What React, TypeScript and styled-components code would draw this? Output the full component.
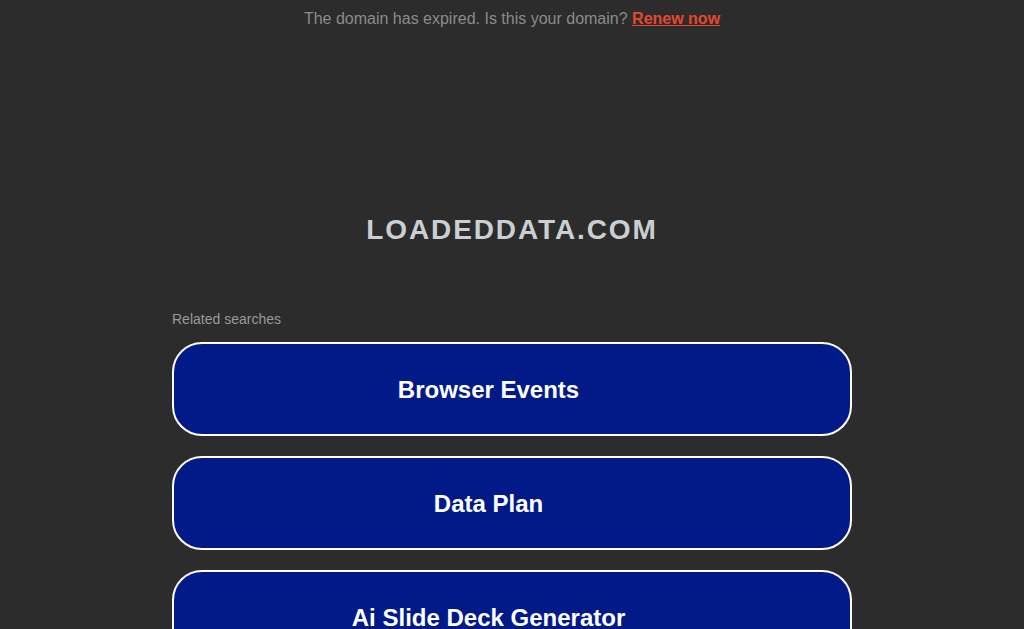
import React from "react";
import styled, { createGlobalStyle } from "styled-components";

const Global = createGlobalStyle`
  html, body { margin: 0; padding: 0; background: #2c2c2c; }
  body { font-family: Arial, "Liberation Sans", sans-serif; overflow: hidden; }
`;

const Page = styled.div`
  width: 1024px;
  height: 629px;
  background: #2c2c2c;
  display: flex;
  flex-direction: column;
  align-items: center;
  overflow: hidden;
`;

const Banner = styled.div`
  margin-top: 10px;
  height: 18px;
  line-height: 18px;
  font-size: 16px;
  color: #8b8b8b;
  text-align: center;
`;

const RenewLink = styled.a`
  color: #e5472f;
  font-weight: bold;
  text-decoration: underline;
`;

const Domain = styled.h1`
  margin: 185px 0 0;
  height: 34px;
  line-height: 34px;
  font-size: 28px;
  font-weight: bold;
  letter-spacing: 1.9px;
  color: #c9cfd3;
  text-align: center;
`;

const Related = styled.section`
  width: 680px;
  margin-top: 64px;
  display: flex;
  flex-direction: column;
`;

const RelatedTitle = styled.div`
  font-size: 14px;
  line-height: 16px;
  color: #999999;
  margin-bottom: 15px;
`;

const List = styled.div`
  display: flex;
  flex-direction: column;
  gap: 20px;
`;

const SearchLink = styled.a`
  box-sizing: border-box;
  height: 94px;
  display: flex;
  align-items: center;
  justify-content: center;
  padding: 1px 57px 0 10px;
  background: #011a87;
  border: 2px solid #ffffff;
  border-radius: 30px;
  color: #ffffff;
  font-size: 24px;
  font-weight: bold;
  text-decoration: none;
`;

const searches = ["Browser Events", "Data Plan", "Ai Slide Deck Generator"];

export default function App() {
  return (
    <>
      <Global />
      <Page>
        <Banner>
          The domain has expired. Is this your domain?{" "}
          <RenewLink href="#">Renew now</RenewLink>
        </Banner>
        <Domain>LOADEDDATA.COM</Domain>
        <Related>
          <RelatedTitle>Related searches</RelatedTitle>
          <List>
            {searches.map((s) => (
              <SearchLink key={s} href="#">
                {s}
              </SearchLink>
            ))}
          </List>
        </Related>
      </Page>
    </>
  );
}
